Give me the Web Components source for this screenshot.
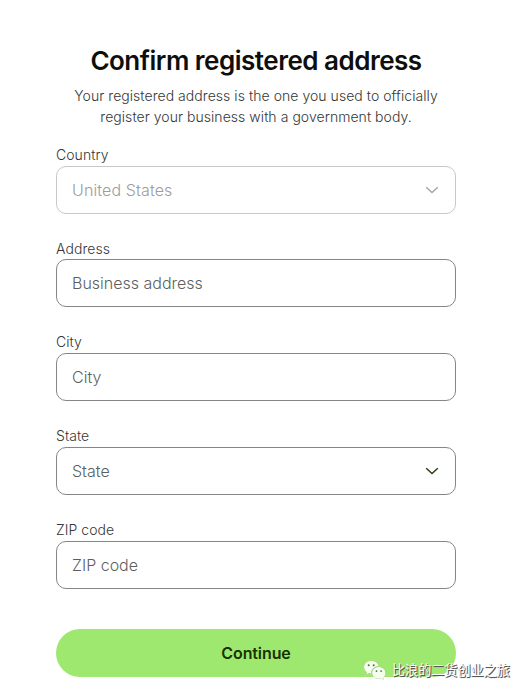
<!DOCTYPE html>
<html lang="en">
<head>
<meta charset="utf-8">
<title>Confirm registered address</title>
<style>
    body {
        margin: 0;
        background: #fff;
        font-family: Inter, "Liberation Sans", sans-serif;
    }
</style>
</head>
<body>
<address-page>
    <page-heading>
        Confirm registered address
        <span slot="description">Your registered address is the one you used to officially<br>register your business with a government body.</span>
    </page-heading>
    <form-field label="Country" type="select" disabled>United States</form-field>
    <form-field label="Address">Business address</form-field>
    <form-field label="City">City</form-field>
    <form-field label="State" type="select">State</form-field>
    <form-field label="ZIP code">ZIP code</form-field>
    <action-button slot="action">Continue</action-button>
    <account-mark slot="mark">比浪的二货创业之旅</account-mark>
</address-page>
<script>
class AddressPage extends HTMLElement {
    constructor() {
        super();
        this.attachShadow({ mode: 'open' });
    }
    connectedCallback() {
        this.shadowRoot.innerHTML = `
            <style>
                :host {
                    display: block;
                    position: relative;
                    box-sizing: border-box;
                    width: 526px;
                    height: 695px;
                    padding: 43px 70px 0 56px;
                    overflow: hidden;
                }
                .action {
                    margin-top: 15.65px;
                }
            </style>
            <slot></slot>
            <div class="action"><slot name="action"></slot></div>
            <slot name="mark"></slot>
        `;
    }
}

class PageHeading extends HTMLElement {
    constructor() {
        super();
        this.attachShadow({ mode: 'open' });
    }
    connectedCallback() {
        this.shadowRoot.innerHTML = `
            <style>
                :host {
                    display: block;
                    height: 101.6px;
                    text-align: center;
                }
                h1 {
                    margin: 0 0 6px;
                    color: #0e0f0c;
                    font-size: 26px;
                    font-weight: 600;
                    line-height: 36px;
                    letter-spacing: -0.5px;
                    white-space: nowrap;
                }
                p {
                    margin: 0;
                    color: #353735;
                    font-size: 14px;
                    font-weight: 300;
                    line-height: 21px;
                    letter-spacing: 0.05px;
                    white-space: nowrap;
                }
            </style>
            <h1><slot></slot></h1>
            <p><slot name="description"></slot></p>
        `;
    }
}

class FormField extends HTMLElement {
    constructor() {
        super();
        this.attachShadow({ mode: 'open' });
    }
    connectedCallback() {
        const chevron = this.getAttribute('type') === 'select'
            ? '<svg width="14" height="8" viewBox="0 0 14 8"><path d="M1.200 1.200L7 6.600l5.800-5.400"/></svg>'
            : '';
        this.shadowRoot.innerHTML = `
            <style>
                :host {
                    display: flow-root;
                    height: 93.75px;
                }
                label {
                    display: block;
                    height: 20.75px;
                    margin-top: 0.25px;
                    color: #353735;
                    font-size: 14px;
                    font-weight: 300;
                    line-height: 20px;
                    letter-spacing: 0.06px;
                }
                .control {
                    display: flex;
                    align-items: center;
                    justify-content: space-between;
                    box-sizing: border-box;
                    height: 48px;
                    padding: 0 16px 0 15px;
                    border: 1px solid #868685;
                    border-radius: 10px;
                    color: #5d5f5d;
                    font-size: 16px;
                    font-weight: 300;
                    line-height: 24px;
                }
                svg {
                    fill: none;
                    stroke: #2b4217;
                    stroke-width: 1.5;
                }
                :host([disabled]) .control {
                    border-color: #c8c8c7;
                    color: #9c9d9c;
                    letter-spacing: 0.12px;
                }
                :host([disabled]) svg {
                    stroke: #a5a6a5;
                }
            </style>
            <label>${this.getAttribute('label')}</label>
            <div class="control"><span><slot></slot></span>${chevron}</div>
        `;
    }
}

class ActionButton extends HTMLElement {
    constructor() {
        super();
        this.attachShadow({ mode: 'open' });
    }
    connectedCallback() {
        this.shadowRoot.innerHTML = `
            <style>
                :host {
                    display: block;
                }
                button {
                    display: block;
                    width: 100%;
                    height: 48px;
                    padding: 0;
                    border: 0;
                    border-radius: 24px;
                    background: #9fe870;
                    color: #163300;
                    font: 600 16px/24px Inter, "Liberation Sans", sans-serif;
                    letter-spacing: -0.1px;
                }
            </style>
            <button><slot></slot></button>
        `;
    }
}

class AccountMark extends HTMLElement {
    constructor() {
        super();
        this.attachShadow({ mode: 'open' });
    }
    connectedCallback() {
        this.shadowRoot.innerHTML = `
            <style>
                /* overlaps the end of the button */
                :host {
                    position: absolute;
                    left: 363px;
                    top: 659px;
                    display: flex;
                    align-items: center;
                    gap: 5px;
                    height: 22px;
                    color: #fff;
                    font: 13.1px/22px "Noto Sans CJK SC", sans-serif;
                    white-space: nowrap;
                    text-shadow: 1px 1px 0 #555, 0.5px 0.5px 1px #777;
                }
                svg {
                    filter: drop-shadow(0.6px 0.7px 0.3px #777);
                }
            </style>
            <svg width="24" height="22" viewBox="0 0 24 22">
                <path fill="#f4ffec" d="M8.200 1.800C4 1.800 1 4.600 1 8.200c0 2 1.100 3.800 2.800 5L3.200 15.700l2.700-1.400c.8.200 1.700.4 2.600.4C7.800 10.600 11.200 7.200 15.700 7.200 15 4 12.200 1.800 8.200 1.800z"/>
                <path fill="#f4ffec" d="M15.800 8c-3.900 0-6.700 2.600-6.700 5.900s2.800 5.900 6.700 5.900c.8 0 1.500-.1 2.200-.3l2.600 1.300-.6-2.200c1.600-1.100 2.600-2.800 2.600-4.700C22.600 10.600 19.500 8 15.800 8z"/>
                <g fill="#527040">
                    <circle cx="5.700" cy="6.300" r="1"/>
                    <circle cx="10.700" cy="6.300" r="1"/>
                    <circle cx="13.500" cy="12.100" r=".9"/>
                    <circle cx="18.100" cy="12.100" r=".9"/>
                </g>
            </svg>
            <span><slot></slot></span>
        `;
    }
}

customElements.define('address-page', AddressPage);
customElements.define('page-heading', PageHeading);
customElements.define('form-field', FormField);
customElements.define('action-button', ActionButton);
customElements.define('account-mark', AccountMark);
</script>
</body>
</html>
